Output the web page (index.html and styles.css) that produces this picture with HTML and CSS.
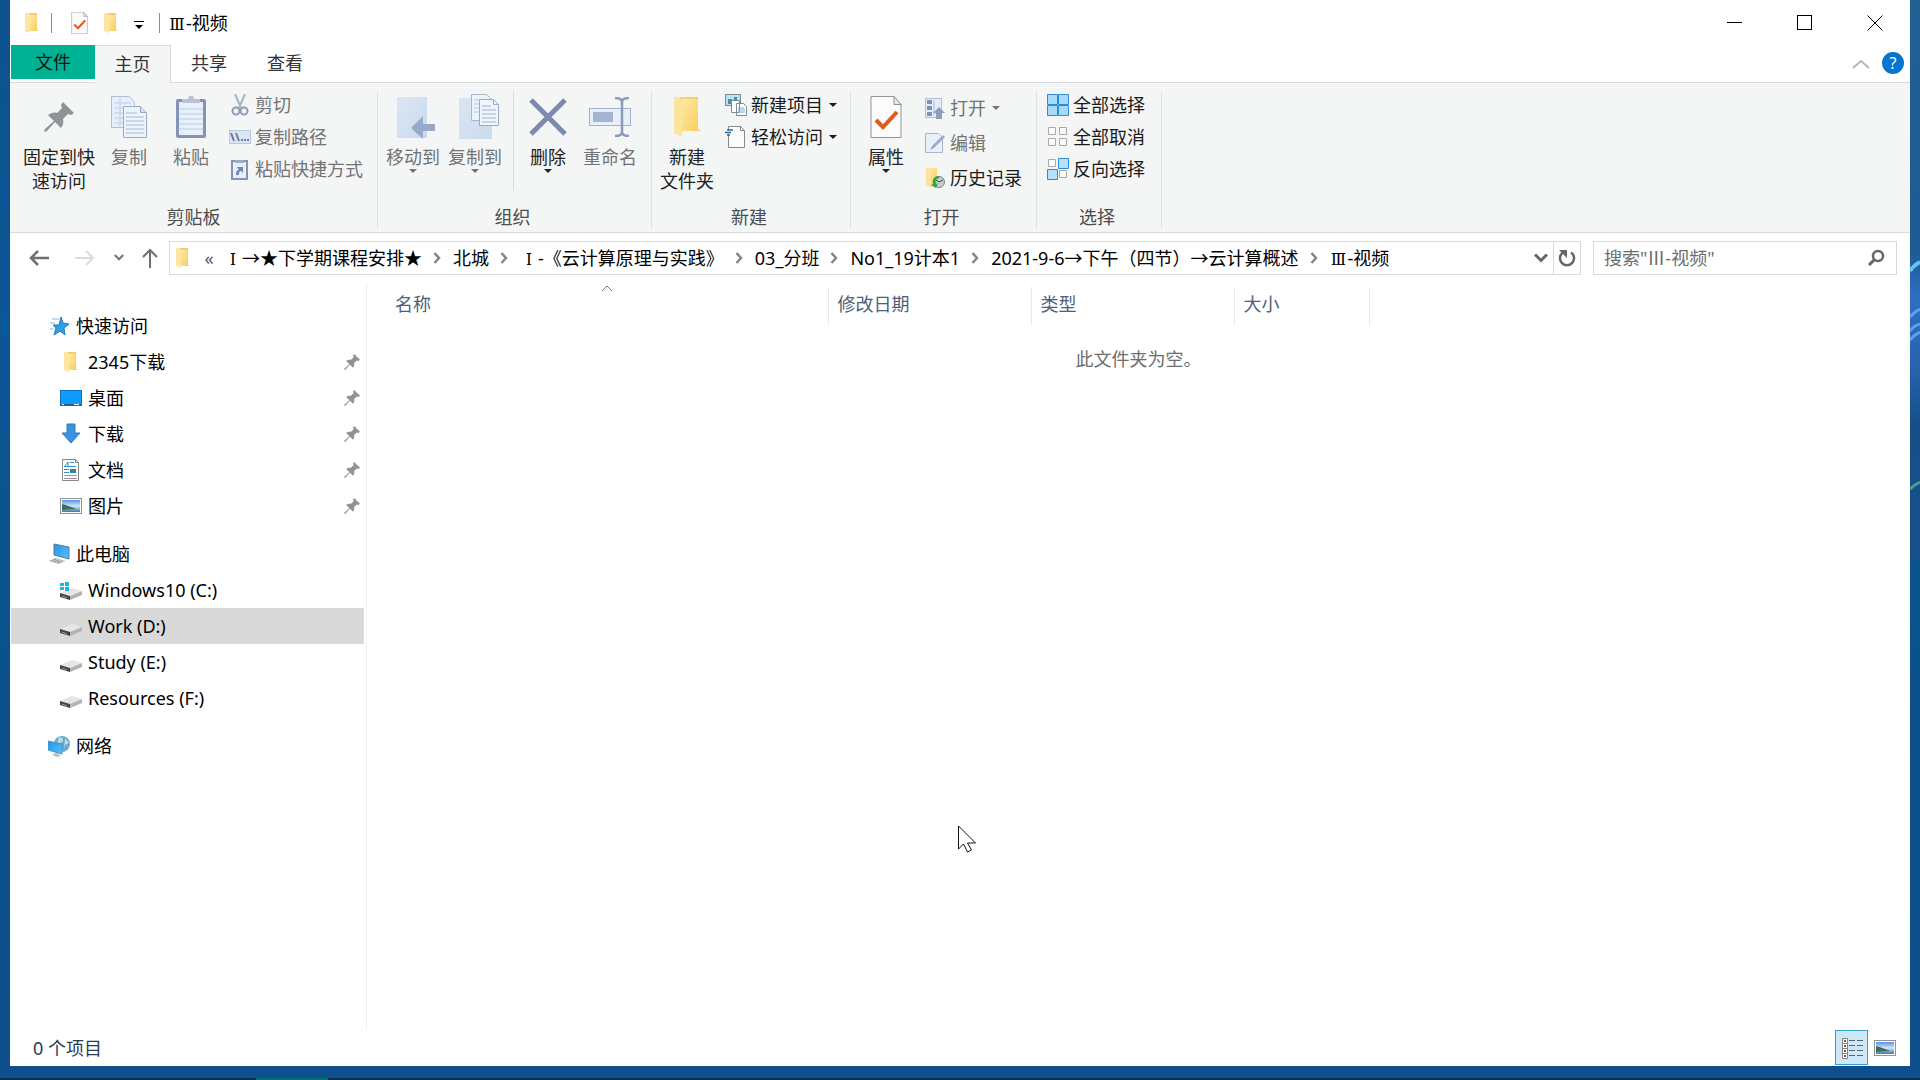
FILE: index.html
```html
<!DOCTYPE html>
<html lang="zh-CN">
<head>
<meta charset="utf-8">
<meta name="viewport" content="width=device-width, initial-scale=1">
<title>Ⅲ-视频</title>
<link rel="stylesheet" href="styles.css">
</head>
<body>
<svg class="defs" aria-hidden="true">
  <defs>
    <linearGradient id="gFolder" x1="0" x2="1" y1="0" y2="1"><stop offset="0" stop-color="#ffe9a6"/><stop offset="1" stop-color="#f7cf5f"/></linearGradient>
    <linearGradient id="gSky" x1="0" x2="0" y1="0" y2="1"><stop offset="0" stop-color="#5b8fe6"/><stop offset=".5" stop-color="#cfe6f7"/><stop offset="1" stop-color="#3f78a8"/></linearGradient>
    <linearGradient id="gScreen" x1="0" x2="1" y1="0" y2="1"><stop offset="0" stop-color="#2193e6"/><stop offset="1" stop-color="#59c1ff"/></linearGradient>
    <linearGradient id="gPale" x1="0" x2="1" y1="0" y2="1"><stop offset="0" stop-color="#dbe6f4"/><stop offset="1" stop-color="#c9dbee"/></linearGradient>
    <linearGradient id="gGlow" x1="0" x2="0" y1="0" y2="1"><stop offset="0" stop-color="#235f93"/><stop offset=".45" stop-color="#1f5a95"/><stop offset=".53" stop-color="#2f6fc0"/><stop offset=".66" stop-color="#2762ac"/><stop offset=".76" stop-color="#164f88"/><stop offset="1" stop-color="#174f8c"/></linearGradient>
    <symbol id="folder" viewBox="0 0 22 22"><path d="M4 1h12v17l2 1H9z" fill="#f3cd67"/><path d="M4 1h4l1 3v17l-5-2z" fill="#fde6a2"/><path d="M9 3h7v16H9z" fill="url(#gFolder)"/></symbol>
    <symbol id="doccheck" viewBox="0 0 32 42"><path d="M1 .5h23l7 8v33H1z" fill="#fbfbfb" stroke="#8f9499"/><path d="M24 .5v8h7z" fill="#e6e8ea" stroke="#8f9499"/><path d="M6 24l7 7 14-15" fill="none" stroke="#e05a1e" stroke-width="4"/></symbol>
    <symbol id="pin" viewBox="0 0 30 30"><path d="M19 0l11 11-3 2-3-1-5 5c1 4 0 6-2 9l-6-6-8 9-3 1 1-3 9-8-6-6c3-2 6-3 9-2l5-5-1-3z" fill="currentColor"/></symbol>
    <symbol id="caret" viewBox="0 0 8 4"><path d="M0 0h8L4 4z" fill="currentColor"/></symbol>
    <symbol id="chev" viewBox="0 0 14 10"><path d="M1 1.500l6 6 6-6" fill="none" stroke="currentColor" stroke-width="3"/></symbol>
    <symbol id="crumb" viewBox="0 0 8 12"><path d="M1.500 1l4.500 5-4.500 5" fill="none" stroke="#858585" stroke-width="2.500"/></symbol>
    <symbol id="copy" viewBox="0 0 36 42"><path d="M.5.5h18l5 6v25H.5z" fill="#e6effa" stroke="#aebdd6"/><path d="M3 7h17M3 12h17M3 17h17M3 22h17M3 27h17M9 2v28" stroke="#bccfe8"/><path d="M12.500 10.500h17l6 6v25h-23z" fill="#edf3fb" stroke="#9aabc8"/><path d="M29.500 10.500v6h6" fill="#d9e3f2" stroke="#9aabc8"/><path d="M15 17h11M15 21h18M15 25h18M15 29h18M15 33h18M15 37h18" stroke="#a3b7d6"/></symbol>
    <symbol id="paste" viewBox="0 0 30 42"><rect x="0" y="3" width="30" height="39" rx="2" fill="#8594b5"/><rect x="3" y="6" width="24" height="33" fill="#e8f0fb"/><path d="M3 13h24M3 18h24M3 23h24M3 28h24M3 33h24" stroke="#bccde6"/><path d="M6 7V3h6l1-3h4l1 3h6v4z" fill="#b7c2d4"/></symbol>
    <symbol id="cut" viewBox="0 0 22 22"><path d="M6 0l6 14M16 0l-6 14" stroke="#a5b2c8" stroke-width="2"/><circle cx="7" cy="17" r="3.500" fill="none" stroke="#8d9cb8" stroke-width="2"/><circle cx="15" cy="17" r="3.500" fill="none" stroke="#8d9cb8" stroke-width="2"/></symbol>
    <symbol id="path" viewBox="0 0 22 22"><rect x=".5" y="4.500" width="21" height="13" fill="#dbe5f3" stroke="#bac8de"/><path d="M2 7l3 8M7 7l3 8" stroke="#6c7d9e" stroke-width="2"/><path d="M12 14h2M15 14h2M18 14h2" stroke="#6c7d9e" stroke-width="2"/></symbol>
    <symbol id="pastelink" viewBox="0 0 22 22"><rect x="3" y="3" width="15" height="18" fill="#e8f0fb" stroke="#8594b5" stroke-width="2"/><path d="M6 5V2h9v3z" fill="#9caac2"/><path d="M7 17c0-4 1-5 3-5L8 9h6v6l-2-2c-2 0-2 2-2 4z" fill="#7186b1"/></symbol>
    <symbol id="moveto" viewBox="-6 0 46 44"><path d="M1 2h30v41H1z" fill="url(#gPale)"/><path d="M39 29H27v-8L15 33l12 11v-8h12z" fill="#98a9ca"/></symbol>
    <symbol id="copyto" viewBox="-8 0 48 46"><path d="M0 4h33v41H0z" fill="url(#gPale)"/><path d="M12.500.5h15l4 4v22h-19z" fill="#edf3fb" stroke="#a7b5cd"/><path d="M15 6h14M15 10h14M15 14h14M15 18h14" stroke="#b7c7de"/><path d="M20.500 5.500h14l5 5v21h-19z" fill="#f1f6fc" stroke="#9aabc8"/><path d="M34.500 5.500v5h5M23 12h9M23 16h14M23 20h14M23 24h14M23 28h14" fill="none" stroke="#9db1d0"/></symbol>
    <symbol id="del" viewBox="0 0 38 38"><path d="M2 2l34 34M36 2L2 36" stroke="#7c8ab0" stroke-width="5"/></symbol>
    <symbol id="rename" viewBox="0 0 42 40"><rect x=".5" y="11.500" width="41" height="17" fill="#e6effa" stroke="#9fb2d3"/><rect x="4" y="15" width="20" height="10" fill="#a4b5d3"/><path d="M26 1c4 0 7 1 7 4 0-3 3-4 7-4M33 4v32M26 39c4 0 7-1 7-4 0 3 3 4 7 4" fill="none" stroke="#8b9abb" stroke-width="2.500"/></symbol>
    <symbol id="newfolder" viewBox="0 0 30 42"><path d="M2 1h24v32l3 2H9z" fill="#f4cf6a"/><path d="M2 1h6l2 5v35l-8-4z" fill="#fce49d"/><path d="M10 3h16v32H10z" fill="url(#gFolder)"/></symbol>
    <symbol id="newitem" viewBox="0 0 22 22"><rect x=".5" y=".5" width="15" height="11" fill="#bfe3ee" stroke="#7e8b94"/><path d="M3 5h4v5H3zM9 3h3v3H9z" fill="#4b8fb0"/><path d="M6.500 6.500h8v12h-8zM11.500 9.500h7l3 3v9h-10z" fill="#fff" stroke="#7e8b94"/><path d="M13 14h6M13 16h7M13 18h7" stroke="#7baed3"/></symbol>
    <symbol id="easy" viewBox="0 0 22 22"><path d="M3.500.5h12l4 4v17h-16z" fill="#fcfcfc" stroke="#85898d"/><path d="M15.500.5v4h4" fill="none" stroke="#85898d"/><path d="M1 4h8v4H1z" fill="#fcfcfc"/><path d="M2 4h6M0 6.500h6M2 9h3" stroke="#28679f" stroke-width="1.500"/></symbol>
    <symbol id="open" viewBox="0 0 22 22"><rect x="1.500" y="1.500" width="16" height="19" fill="#e2ebf7" stroke="#b2bfd4"/><path d="M3 3h5v4H3zM3 9h5v4H3zM3 15h5v4H3z" fill="#8091b3"/><path d="M10 3v15" stroke="#b2bfd4"/><path d="M15 10l6 6h-3v6h-6v-6H9z" fill="#8d9dbf"/></symbol>
    <symbol id="edit" viewBox="0 0 22 22"><path d="M1.500 1.500h13l4 4v15h-17z" fill="#e9f0fa" stroke="#a8b6ce"/><path d="M19 3L8 14l-2 4 4-2L21 5z" fill="#9cacc9"/></symbol>
    <symbol id="history" viewBox="0 0 22 22"><path d="M2 1h11v15l-6 4-5-2z" fill="url(#gFolder)"/><path d="M2 1h3l2 3v16l-5-2z" fill="#fce49d"/><circle cx="15" cy="15" r="5.500" fill="#c6cccc" stroke="#7d8587"/><path d="M12 13l3 2 4-2" fill="none" stroke="#444"/><path d="M15 9c-5 0-7 3-6 8l-2 1 5 3 2-5-2 1c-1-4 0-5 3-6z" fill="#2fa646"/></symbol>
    <symbol id="selall" viewBox="0 0 22 22"><path d="M.5.5h10v10H.5zM11.500.5h10v10h-10zM.5 11.500h10v10H.5zM11.500 11.500h10v10h-10z" fill="#a5daf9" stroke="#2f8bd0"/></symbol>
    <symbol id="selnone" viewBox="0 0 22 22"><path d="M1.500 1.500h7v7h-7zM12.500 1.500h7v7h-7zM1.500 12.500h7v7h-7zM12.500 12.500h7v7h-7z" fill="#fafafa" stroke="#a7aaad"/></symbol>
    <symbol id="selinv" viewBox="0 0 22 22"><path d="M1.500 1.500h7v7h-7zM12.500 12.500h7v7h-7z" fill="#fafafa" stroke="#a7aaad"/><path d="M11.500.5h10v10h-10zM.5 11.500h10v10H.5z" fill="#b5e1fb" stroke="#2f8bd0"/></symbol>
    <symbol id="star" viewBox="0 0 22 22"><path d="M13 2l2 6 6 1-5 4 1 7-5-4-6 4 2-7-3-3h6z" fill="#2f9fe8" stroke="#1b7cc4"/><path d="M4 4h7M2 8h5M2 14h3" stroke="#6fc0f2"/></symbol>
    <symbol id="desktop" viewBox="0 0 22 22"><rect x=".5" y="3.500" width="21" height="15" fill="#109cff" stroke="#0d72b9"/><path d="M1 17.500h20" stroke="#0a5f9d"/><path d="M2 17.500h2M14 17.500h5" stroke="#fff"/></symbol>
    <symbol id="down" viewBox="0 0 22 22"><path d="M7 1h8v9h5l-9 10-9-10h5z" fill="#3b92e0" stroke="#2b7bc4"/></symbol>
    <symbol id="doc" viewBox="0 0 22 22"><path d="M2.500.5h13l3 3v18h-16z" fill="#fdfdfd" stroke="#84898d"/><path d="M15.500.5v3h3" fill="none" stroke="#84898d"/><path d="M5 7l3-4v4M10 3.500h4M4 7.500h12M4 10.500h5M4 13.500h5" fill="none" stroke="#2d91c2"/><path d="M4 16.500h13M4 19.500h13" stroke="#a9959c"/><rect x="10" y="10" width="6" height="4" fill="#3681a8"/></symbol>
    <symbol id="pic" viewBox="0 0 22 22"><rect x=".5" y="3.500" width="21" height="15" fill="#fff" stroke="#8d9397"/><rect x="2" y="5" width="18" height="12" fill="url(#gSky)"/><path d="M2 9c5 1 9 3 14 5l-14 1z" fill="#3e6f55"/></symbol>
    <symbol id="pc" viewBox="0 0 22 22"><path d="M6 1l15 3v12L6 12z" fill="url(#gScreen)" stroke="#5c7d92"/><path d="M0 18l8-3 10 3-7 3z" fill="#c6cbce"/><path d="M3 18l5-2M6 19l5-2M9 20l5-2" stroke="#909699"/></symbol>
    <symbol id="drive" viewBox="0 0 22 22"><path d="M0 14l12-5 10 3-12 5z" fill="#e5e5e5"/><path d="M0 14l10 3v4L0 18z" fill="#444"/><path d="M10 17l12-5v4l-12 5z" fill="#b4b4b4"/><path d="M2 17l5 2" stroke="#a0a0a0"/></symbol>
    <symbol id="sysdrive" viewBox="0 0 22 22"><use href="#drive"/><path d="M0 4h4v3H0zM5 3h4v4H5zM0 8h4v3H0zM5 8h4v4H5z" fill="#14b8e4"/></symbol>
    <symbol id="net" viewBox="0 0 22 22"><circle cx="14" cy="9" r="8" fill="#6ba9c7"/><path d="M11 2c4 0 5 3 3 5s-3 0-5 2M17 3l4 5-4 2-1 5" fill="#b8dcea"/><path d="M0 6l14 3v10L0 15z" fill="url(#gScreen)" stroke="#4a96cb"/><path d="M4 19l5-1 4 3-5 1z" fill="#b9bec1"/></symbol>
  </defs>
</svg>

<svg class="wallpaper" viewBox="0 0 10 560" aria-hidden="true">
  <path d="M0 0h10v560H0z" fill="url(#gGlow)"/>
  <path d="M0 271c3-5 6-7 10-9" fill="none" stroke="#63c3f2" stroke-width="4"/>
  <path d="M0 317c3-4 6-6 10-8M0 331c3-4 6-6 10-7M0 340c3-4 6-6 10-8" fill="none" stroke="#5aa3ec" stroke-width="3"/>
  <path d="M0 489c3-3 6-5 10-7" fill="none" stroke="#48a08c" stroke-width="3"/>
</svg>

<div class="window">
  <header class="titlebar">
    <svg class="i22"><use href="#folder"/></svg>
    <span class="tsep"></span>
    <button class="qa" aria-label="属性"><svg class="qdoc"><use href="#doccheck"/></svg></button>
    <button class="qa" aria-label="新建文件夹"><svg class="i22"><use href="#folder"/></svg></button>
    <button class="qa slim" aria-label="自定义快速访问工具栏"><svg class="qmore" viewBox="0 0 10 8"><path d="M0 .5h10" stroke="#000"/><path d="M1 4h8L5 8z"/></svg></button>
    <span class="tsep"></span>
    <h1 class="title"><span class="rn">Ⅲ</span>-视频</h1>
    <div class="winbtns">
      <button aria-label="最小化"><svg viewBox="0 0 16 16"><path d="M0 7.500h15" stroke="#000"/></svg></button>
      <button aria-label="最大化"><svg viewBox="0 0 16 16"><rect x=".5" y=".5" width="14" height="14" fill="none" stroke="#000"/></svg></button>
      <button aria-label="关闭"><svg viewBox="0 0 16 16"><path d="M.5.500l15 15M15.500.500l-15 15" stroke="#000"/></svg></button>
    </div>
  </header>

  <nav class="tabs">
    <button class="tab file">文件</button>
    <button class="tab active">主页</button>
    <button class="tab">共享</button>
    <button class="tab">查看</button>
    <button class="collapse" aria-label="折叠功能区"><svg viewBox="0 0 18 10"><path d="M1 9l8-7 8 7" fill="none" stroke="#b5b5b5" stroke-width="2"/></svg></button>
    <button class="help" aria-label="帮助">?</button>
  </nav>

  <section class="ribbon">
    <div class="group g-clip">
      <div class="tools">
        <button class="big wide"><span class="art"><svg class="pinbig"><use href="#pin"/></svg></span>固定到快<br>速访问</button>
        <button class="big" disabled><span class="art"><svg width="36" height="42"><use href="#copy"/></svg></span>复制</button>
        <button class="big" disabled><span class="art"><svg width="30" height="42"><use href="#paste"/></svg></span>粘贴</button>
        <div class="small">
          <button disabled><svg class="i22"><use href="#cut"/></svg>剪切</button>
          <button disabled><svg class="i22"><use href="#path"/></svg>复制路径</button>
          <button disabled><svg class="i22"><use href="#pastelink"/></svg>粘贴快捷方式</button>
        </div>
      </div>
      <div class="glabel">剪贴板</div>
    </div>
    <div class="group g-org">
      <div class="tools">
        <button class="big" disabled><span class="art"><svg width="46" height="44"><use href="#moveto"/></svg></span>移动到<svg class="caret"><use href="#caret"/></svg></button>
        <button class="big" disabled><span class="art"><svg width="48" height="46"><use href="#copyto"/></svg></span>复制到<svg class="caret"><use href="#caret"/></svg></button>
        <span class="rsep"></span>
        <button class="big"><span class="art"><svg width="38" height="38"><use href="#del"/></svg></span>删除<svg class="caret"><use href="#caret"/></svg></button>
        <button class="big" disabled><span class="art"><svg width="42" height="40"><use href="#rename"/></svg></span>重命名</button>
      </div>
      <div class="glabel">组织</div>
    </div>
    <div class="group g-new">
      <div class="tools">
        <button class="big"><span class="art"><svg width="30" height="42"><use href="#newfolder"/></svg></span>新建<br>文件夹</button>
        <div class="small">
          <button><svg class="i22"><use href="#newitem"/></svg>新建项目<svg class="caret"><use href="#caret"/></svg></button>
          <button><svg class="i22"><use href="#easy"/></svg>轻松访问<svg class="caret"><use href="#caret"/></svg></button>
        </div>
      </div>
      <div class="glabel">新建</div>
    </div>
    <div class="group g-open">
      <div class="tools">
        <button class="big"><span class="art"><svg width="32" height="42"><use href="#doccheck"/></svg></span>属性<svg class="caret"><use href="#caret"/></svg></button>
        <div class="small roomy">
          <button disabled><svg class="i22"><use href="#open"/></svg>打开<svg class="caret"><use href="#caret"/></svg></button>
          <button disabled><svg class="i22"><use href="#edit"/></svg>编辑</button>
          <button><svg class="i22"><use href="#history"/></svg>历史记录</button>
        </div>
      </div>
      <div class="glabel">打开</div>
    </div>
    <div class="group g-sel">
      <div class="tools">
        <div class="small">
          <button><svg class="i22"><use href="#selall"/></svg>全部选择</button>
          <button><svg class="i22"><use href="#selnone"/></svg>全部取消</button>
          <button><svg class="i22"><use href="#selinv"/></svg>反向选择</button>
        </div>
      </div>
      <div class="glabel">选择</div>
    </div>
  </section>

  <div class="navrow">
    <div class="history">
      <button aria-label="后退"><svg width="20" height="16" viewBox="0 0 20 16"><path d="M2 8h18M9 1L2 8l7 7" fill="none" stroke="#6e6e6e" stroke-width="2.500"/></svg></button>
      <button aria-label="前进" disabled><svg width="20" height="16" viewBox="0 0 20 16"><path d="M0 8h18M11 1l7 7-7 7" fill="none" stroke="#dcdcdc" stroke-width="2"/></svg></button>
      <button class="recent" aria-label="最近浏览的位置"><svg width="10" height="7"><use href="#chev"/></svg></button>
      <button class="up" aria-label="上移"><svg width="16" height="20" viewBox="0 0 16 20"><path d="M8 2v18M1 9l7-7 7 7" fill="none" stroke="#6e6e6e" stroke-width="2"/></svg></button>
    </div>
    <div class="address">
      <svg class="i22"><use href="#folder"/></svg>
      <span class="more">«</span>
      <ol class="crumbs">
        <li><a href="#"><span class="rn">Ⅰ</span>→★下学期课程安排★</a><svg><use href="#crumb"/></svg></li>
        <li><a href="#">北城</a><svg><use href="#crumb"/></svg></li>
        <li><a href="#"><span class="rn">Ⅰ</span>-《云计算原理与实践》</a><svg><use href="#crumb"/></svg></li>
        <li><a href="#">03_分班</a><svg><use href="#crumb"/></svg></li>
        <li><a href="#">No1_19计本1</a><svg><use href="#crumb"/></svg></li>
        <li><a href="#">2021-9-6→下午（四节）→云计算概述</a><svg><use href="#crumb"/></svg></li>
        <li><a href="#"><span class="rn">Ⅲ</span>-视频</a></li>
      </ol>
      <button class="drop" aria-label="以前的位置"><svg width="14" height="10"><use href="#chev"/></svg></button>
      <button class="refresh" aria-label="刷新"><svg width="18" height="18" viewBox="0 0 18 18"><path d="M13 3.500A7 7 0 1 1 5 3.500" fill="none" stroke="#666" stroke-width="2.500"/><path d="M1 1h8v8z" fill="#666"/></svg></button>
    </div>
    <div class="search">
      <input type="search" aria-label="搜索" placeholder="搜索&quot;Ⅲ-视频&quot;">
      <svg width="18" height="18" viewBox="0 0 18 18"><circle cx="11" cy="7" r="5" fill="none" stroke="#666" stroke-width="2.500"/><path d="M8 10l-6 6" stroke="#666" stroke-width="3"/></svg>
    </div>
  </div>

  <main class="content">
    <nav class="tree">
      <ul>
        <li><a class="root" href="#"><svg class="i22"><use href="#star"/></svg>快速访问</a></li>
        <li><a href="#"><svg class="i22"><use href="#folder"/></svg>2345下载<svg class="pin"><use href="#pin"/></svg></a></li>
        <li><a href="#"><svg class="i22"><use href="#desktop"/></svg>桌面<svg class="pin"><use href="#pin"/></svg></a></li>
        <li><a href="#"><svg class="i22"><use href="#down"/></svg>下载<svg class="pin"><use href="#pin"/></svg></a></li>
        <li><a href="#"><svg class="i22"><use href="#doc"/></svg>文档<svg class="pin"><use href="#pin"/></svg></a></li>
        <li><a href="#"><svg class="i22"><use href="#pic"/></svg>图片<svg class="pin"><use href="#pin"/></svg></a></li>
      </ul>
      <ul>
        <li><a class="root" href="#"><svg class="i22"><use href="#pc"/></svg>此电脑</a></li>
        <li><a href="#"><svg class="i22"><use href="#sysdrive"/></svg>Windows10 (C:)</a></li>
        <li><a class="selected" href="#"><svg class="i22"><use href="#drive"/></svg>Work (D:)</a></li>
        <li><a href="#"><svg class="i22"><use href="#drive"/></svg>Study (E:)</a></li>
        <li><a href="#"><svg class="i22"><use href="#drive"/></svg>Resources (F:)</a></li>
      </ul>
      <ul>
        <li><a class="root" href="#"><svg class="i22"><use href="#net"/></svg>网络</a></li>
      </ul>
    </nav>
    <section class="files">
      <table>
        <thead><tr>
          <th class="c-name">名称<svg class="sort" viewBox="0 0 12 7"><path d="M1 6l5-5 5 5" fill="none" stroke="#777"/></svg></th>
          <th class="c-date">修改日期</th>
          <th class="c-type">类型</th>
          <th class="c-size">大小</th>
        </tr></thead>
      </table>
      <p class="empty">此文件夹为空。</p>
    </section>
  </main>

  <footer class="status">
    <span>0 个项目</span>
    <div class="views">
      <button class="on" aria-label="详细信息"><svg width="22" height="22" viewBox="0 0 22 22"><path d="M1.500 1.500h5v5h-5zM1.500 6.500h5v5h-5zM1.500 11.500h5v5h-5zM1.500 16.500h5v5h-5z" fill="#fff" stroke="#8e8078"/><path d="M3 4h2M3 9h2M3 14h2M3 19h2" stroke="#7a5a54" stroke-width="2"/><path d="M8 3.500h6M16 3.500h6M8 8.500h6M16 8.500h6M8 13.500h6M16 13.500h6M8 18.500h6M16 18.500h6" stroke="#5d6468"/></svg></button>
      <button aria-label="大图标"><svg class="i22"><use href="#pic"/></svg></button>
    </div>
  </footer>
</div>
<div class="taskbar"><span></span></div>
<svg class="cursor" viewBox="0 0 19 29"><path d="M.5 1v23l5-5 4 8 4-2-4-7h8z" fill="#fff" stroke="#111"/></svg>
</body>
</html>
```
FILE: styles.css
```css
* { box-sizing: border-box; }

body {
  position: relative;
  margin: 0;
  min-height: 100vh;
  display: flex;
  flex-direction: column;
  font: 18px/24px "Noto Sans", "Noto Sans CJK SC", sans-serif;
  color: #1a1a1a;
  background: linear-gradient(180deg, #0e5190 0%, #0a5795 30%, #0b4f8c 70%, #0f4f8f 100%);
}

.defs { position: absolute; width: 0; height: 0; }
.wallpaper { position: absolute; top: 0; right: 0; width: 10px; height: 560px; }
svg { display: block; flex: none; }
.i22 { width: 22px; height: 22px; }

button {
  font: inherit;
  color: inherit;
  background: none;
  border: 0;
  padding: 0;
  display: flex;
  align-items: center;
  justify-content: center;
}
button:disabled { color: #737373; }
a { color: inherit; text-decoration: none; }
ul, ol { list-style: none; margin: 0; padding: 0; }

/* roman numerals take one full-width cell */
.rn { display: inline-block; width: 18px; text-align: center; font-family: "DejaVu Serif", serif; font-size: 16px; line-height: 20px; }

.window {
  flex: 1;
  display: flex;
  flex-direction: column;
  margin: 0 10px 12px;
  background: #fff;
}

/* title bar */
.titlebar { display: flex; align-items: center; height: 45px; padding-left: 11px; }
.tsep { width: 1px; height: 20px; background: #8c8c8c; margin-left: 8px; }
.qa { width: 32px; height: 32px; }
.qa.slim { width: 24px; }
.tsep + .qa { margin-left: 11px; }
.qdoc { width: 17px; height: 22px; }
.qmore { width: 10px; height: 8px; margin-top: 4px; }
.title { margin: 0 0 0 8px; font-size: 18px; font-weight: 400; color: #000; }
.winbtns { display: flex; margin-left: auto; align-self: stretch; }
.winbtns button { width: 70px; }
.winbtns svg { width: 16px; height: 16px; }

/* tabs */
.tabs { display: flex; height: 38px; border-bottom: 1px solid #dadbdc; padding-left: 1px; }
.tab { width: 76px; height: 36px; color: #333; }
.tab.file { width: 84px; height: 34px; background: #00b294; color: #111; }
.tab.active { height: 38px; padding-bottom: 1px; background: #f4f6f6; border: 1px solid #dadbdc; border-width: 1px 1px 0 0; }
.collapse { margin-left: auto; }
.collapse svg { width: 18px; height: 10px; }
.help {
  width: 22px; height: 22px; margin: 7px 6px 0 12px; border-radius: 50%;
  background: #0575d2; color: #fff; font-size: 16px; line-height: 22px;
}

/* ribbon */
.ribbon { display: flex; height: 150px; padding: 8px 0 3px; background: #f4f6f6; border-bottom: 1px solid #dadbdc; }
.group { display: flex; flex-direction: column; border-right: 1px solid #e2e3e4; }
.tools { display: flex; flex: 1; }
.glabel { text-align: center; color: #4c4c4c; }
.g-clip { width: 368px; }
.g-clip .tools { padding-left: 10px; }
.g-org { width: 274px; }
.g-org .glabel, .g-new .glabel, .g-open .glabel, .g-sel .glabel { padding-right: 4px; }
.g-org .tools, .g-new .tools { padding-left: 4px; }
.g-new { width: 199px; }
.g-open { width: 186px; }
.g-open .tools { padding-left: 4px; }
.g-sel { width: 125px; }
.g-sel .tools { padding-left: 3px; }
.big { width: 62px; flex-direction: column; justify-content: flex-start; color: #222; white-space: nowrap; }
.big.wide { width: 78px; }
.art { display: flex; align-items: center; justify-content: center; height: 52px; margin-bottom: 2px; }
.pinbig { width: 30px; height: 30px; color: #8f9498; }
.caret { width: 8px; height: 4px; }
.small { display: flex; flex-direction: column; gap: 8px; padding: 2px 0 0 7px; }
.small button { gap: 4px; justify-content: flex-start; white-space: nowrap; }
.small .caret { margin-left: 2px; }
.small.roomy { gap: 11px; padding-top: 5px; }
.rsep { width: 1px; height: 100px; margin: 0 3px 0 7px; background: #d9dadb; }

/* navigation row */
.navrow { display: flex; align-items: center; height: 50px; padding: 0 13px 1px 0; }
.history { display: flex; align-items: center; width: 159px; padding-left: 14px; color: #777; }
.history button { width: 30px; height: 32px; }
.history button + button { margin-left: 16px; }
.history .recent { width: 10px; margin-left: 14px; }
.history .up { width: 20px; margin-left: 16px; }
.history .recent + .up { margin-left: 16px; }
.address { display: flex; align-items: center; flex: 1; height: 34px; border: 1px solid #d9d9d9; padding-left: 2px; }
.more { width: 30px; text-align: center; color: #555; }
.crumbs { display: flex; flex: 1; color: #000; white-space: nowrap; }
.crumbs li { display: flex; align-items: center; }
.crumbs svg { width: 8px; height: 12px; margin: 0 12px 0 11px; }
.drop { width: 24px; height: 32px; color: #666; }
.refresh { width: 27px; height: 32px; border-left: 1px solid #d9d9d9; }
.search { display: flex; align-items: center; width: 304px; height: 34px; margin-left: 12px; padding: 0 11px 0 10px; border: 1px solid #d9d9d9; }
.search input { flex: 1; min-width: 0; border: 0; padding: 0; outline: 0; font: inherit; background: none; }
.search input::placeholder { color: #6d6d6d; opacity: 1; }

/* tree and file list */
.content { display: flex; flex: 1; }
.tree { width: 357px; padding: 25px 2px 0 1px; border-right: 1px solid #f0f0f0; color: #000; }
.tree ul + ul { margin-top: 12px; }
.tree a { display: flex; align-items: center; height: 36px; padding: 0 4px 0 49px; gap: 6px; }
.tree a.root { padding-left: 37px; }
.tree a.selected { background: #d9d9d9; }
.pin { width: 16px; height: 16px; margin-left: auto; color: #8f9498; }
.files { flex: 1; }
.files table { border-collapse: collapse; table-layout: fixed; margin-top: 4px; color: #4c607a; }
.files th { position: relative; height: 38px; padding: 0 0 4px 9px; font-weight: 400; text-align: left; border-right: 1px solid #e8e8e8; }
.files .c-name { width: 461px; padding-left: 28px; }
.c-date, .c-type { width: 203px; }
.c-size { width: 135px; }
.sort { position: absolute; top: -2px; left: 234px; width: 12px; height: 7px; }
.empty { margin: 22px 0 0; text-align: center; color: #6d6d6d; }

/* status bar */
.status { display: flex; align-items: center; justify-content: space-between; height: 36px; padding: 0 9px 1px 23px; color: #2b3c54; }
.views { display: flex; align-items: center; }
.views button { width: 33px; height: 35px; }
.views .on { background: #cce8f6; border: 1px solid #3a9fc8; }

.taskbar { display: flex; height: 2px; background: #06334f; }
.taskbar span { width: 72px; margin-left: 256px; background: #04706f; }

.cursor { position: absolute; left: 958px; top: 825px; width: 19px; height: 29px; }
```
